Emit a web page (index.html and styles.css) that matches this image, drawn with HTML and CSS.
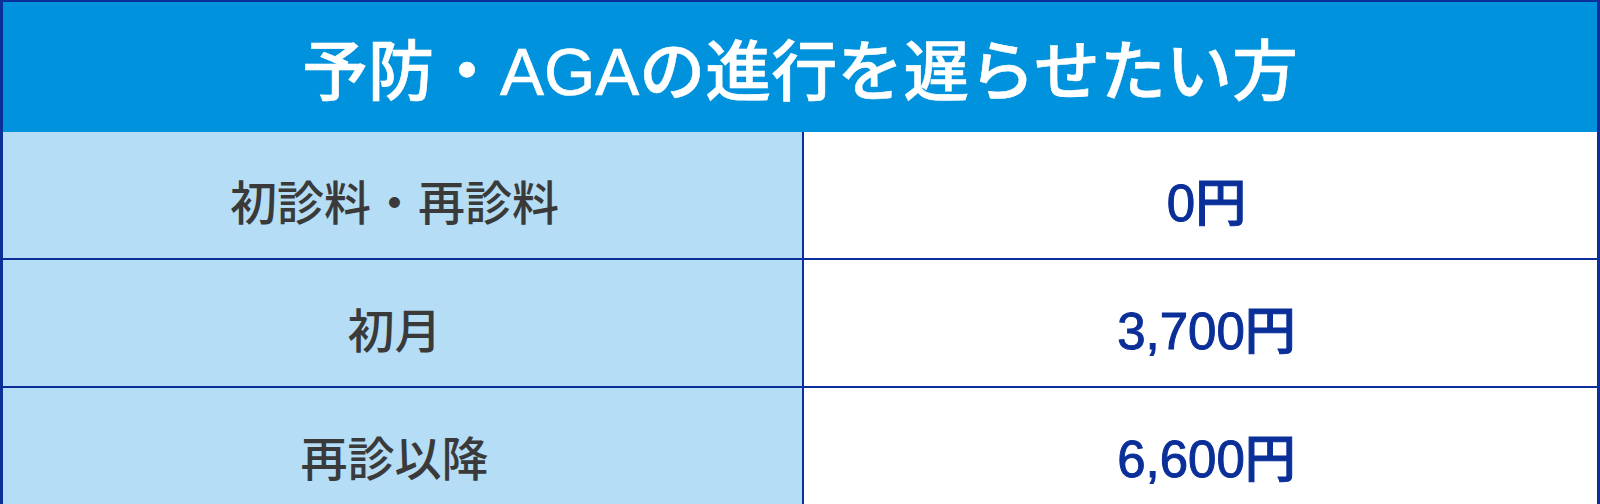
FILE: index.html
```html
<!DOCTYPE html>
<html lang="ja">
<head>
<meta charset="utf-8">
<link rel="stylesheet" href="styles.css">
</head>
<body>
<div class="price-table">
  <div class="title">予防・AGAの進行を遅らせたい方</div>
  <div class="row">
    <div class="label">初診料・再診料</div>
    <div class="value">0円</div>
  </div>
  <div class="row">
    <div class="label">初月</div>
    <div class="value">3,700円</div>
  </div>
  <div class="row">
    <div class="label">再診以降</div>
    <div class="value">6,600円</div>
  </div>
</div>
</body>
</html>
```
FILE: styles.css
```css
html, body {
  margin: 0;
  padding: 0;
  background: #ffffff;
}
body {
  width: 1600px;
  height: 504px;
  overflow: hidden;
}
.price-table {
  width: 1600px;
  box-sizing: border-box;
  border-top: 2px solid #0b2f98;
  border-left: 3px solid #0b2f98;
  border-right: 3px solid #0b2f98;
  font-family: "Liberation Sans", "Noto Sans CJK JP", sans-serif;
  font-weight: 500;
}
.title {
  height: 130px;
  background: #0092dc;
  color: #ffffff;
  display: flex;
  align-items: center;
  justify-content: center;
  font-size: 66px;
  padding-bottom: 2px;
  box-sizing: border-box;
  -webkit-text-stroke: 0.6px #ffffff;
}
.row {
  display: grid;
  grid-template-columns: 799px 1fr;
  column-gap: 2px;
  background: #0b2f98;
  border-bottom: 2px solid #0b2f98;
}
.label, .value {
  height: 126px;
  display: flex;
  align-items: center;
  justify-content: center;
  padding-top: 8px;
  box-sizing: border-box;
}
.label {
  background: #b5ddf5;
  color: #3a3a3a;
  font-size: 47px;
  padding-right: 16px;
}
.value {
  background: #ffffff;
  color: #0b2f98;
  font-size: 51px;
  padding-left: 12px;
  -webkit-text-stroke: 1px #0b2f98;
}
```
